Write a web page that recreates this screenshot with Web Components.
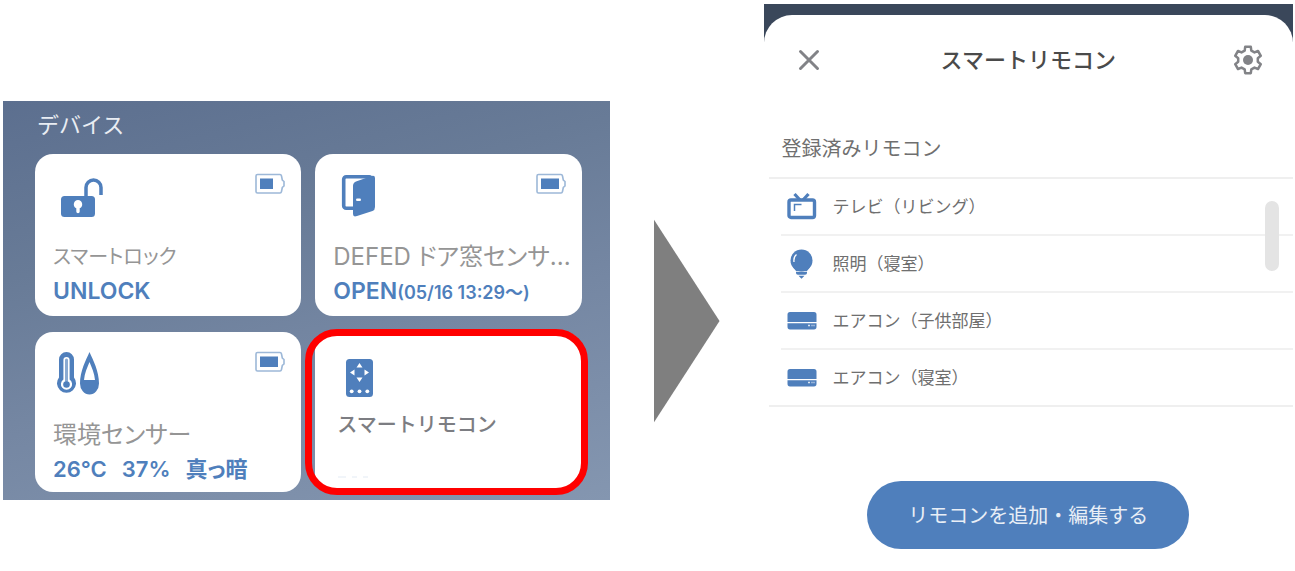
<!DOCTYPE html>
<html lang="ja">
<head>
<meta charset="UTF-8">
<title>スマートリモコン</title>
<style>
  body {
    margin: 0;
    background: #fff;
    font-family: Inter, "Noto Sans CJK JP", sans-serif;
  }
  .large {
    font-size: 23px;
  }
  .large small {
    font-size: 18px;
  }
</style>
</head>
<body>
<flow-page>
  <device-panel heading="デバイス">
    <device-card icon="lock" label="スマートロック" battery="13" small>
      <span class="large">UNLOCK</span>
    </device-card>
    <device-card icon="door" label="DEFED ドア窓センサ..." battery="18">
      <span class="large">OPEN<small>(05/16 13:29〜)</small></span>
    </device-card>
    <device-card icon="climate" label="環境センサー" battery="18">
      <span>26℃</span><span>37%</span><span>真っ暗</span>
    </device-card>
    <device-card icon="remote" label="スマートリモコン" highlighted></device-card>
  </device-panel>
  <flow-arrow></flow-arrow>
  <remote-sheet heading="スマートリモコン">
    <remote-row icon="tv">テレビ（リビング）</remote-row>
    <remote-row icon="bulb">照明（寝室）</remote-row>
    <remote-row icon="aircon">エアコン（子供部屋）</remote-row>
    <remote-row icon="aircon">エアコン（寝室）</remote-row>
  </remote-sheet>
</flow-page>

<script>
const BLUE = '#4f7fbc';

const ICONS = {
  lock: `<svg width="48" height="48" viewBox="0 0 48 48" fill="${BLUE}">
    <path d="M31 25V14.500a7.500 7.500 0 0 1 15 0V22" fill="none" stroke="${BLUE}" stroke-width="3.500"/>
    <rect x="6" y="23" width="34" height="21" rx="3.500"/>
    <path d="M23 27a4.300 4.300 0 0 1 1.700 8.200V38.500a1.700 1.700 0 0 1-3.400 0V35.200A4.300 4.300 0 0 1 23 27z" fill="#fff"/>
  </svg>`,
  door: `<svg width="48" height="48" viewBox="0 0 48 48">
    <rect x="8.700" y="3.700" width="28" height="31.600" rx="2.500" fill="#fff" stroke="${BLUE}" stroke-width="3.600"/>
    <path d="M18 13Q18 9.500 21 8.500L36.500 3Q40 2 40 5V34Q40 37 37.500 38L22 43Q18 44.500 18 41z" fill="${BLUE}"/>
    <rect x="21" y="25.500" width="5" height="2.600" rx="1.300" fill="#fff"/>
  </svg>`,
  climate: `<svg width="48" height="48" viewBox="0 0 48 48">
    <path d="M4 8.500a7.500 7.500 0 0 1 15 0V26.500a9.500 9.500 0 1 1-15 0z" fill="${BLUE}"/>
    <path d="M8.400 9a3.100 3.100 0 0 1 6.200 0V28.500a5.600 5.600 0 1 1-6.200 0z" fill="#fff"/>
    <path d="M11.500 9V30" stroke="#8aaad2" stroke-width="3" stroke-linecap="round"/>
    <circle cx="11.500" cy="33.500" r="3.300" fill="${BLUE}"/>
    <path d="M34.500 1C38 9 44 20 44 32.500A9.500 11 0 0 1 25 32.500C25 20 31 9 34.500 1z" fill="${BLUE}"/>
    <path d="M34.500 11C36.500 16 39.500 22 40 29H29C29.500 22 32.500 16 34.500 11z" fill="#fff"/>
  </svg>`,
  remote: `<svg width="48" height="48" viewBox="0 0 48 48">
    <rect x="7" y="8" width="27" height="38" rx="3.500" fill="${BLUE}"/>
    <path d="M20.500 12l3 4.500h-6zM20.500 31l3-4.500h-6zM11 21.500l4.500-3v6zM30 21.500l-4.500-3v6z" fill="#fff"/>
    <circle cx="12.700" cy="40.300" r="1.900" fill="#fff"/>
    <circle cx="20.500" cy="40.300" r="1.900" fill="#fff"/>
    <circle cx="28.300" cy="40.300" r="1.900" fill="#fff"/>
  </svg>`,
  tv: `<svg width="30" height="30" viewBox="0 0 30 30" fill="none" stroke="${BLUE}">
    <path d="M7.500 2l5.500 6M21.500 2l-5.500 6" stroke-width="3.200"/>
    <rect x="2" y="8" width="25.500" height="17.500" rx="2" stroke-width="3.400"/>
    <path d="M7.500 19v-6.500h7" stroke-width="1.500"/>
  </svg>`,
  bulb: `<svg width="30" height="30" viewBox="0 0 30 30" fill="${BLUE}">
    <circle cx="14.500" cy="11.500" r="11"/>
    <path d="M6 18h17l-3 4H9zM9 22.800h11v1.200q0 1.500-2 1.800h-7q-2-.3-2-1.800zM11.500 26.800h6l-3 3z"/>
    <path d="M7 13c-.5-4 .5-6 2.500-7.500" fill="none" stroke="#fff" stroke-width="1.300"/>
  </svg>`,
  aircon: `<svg width="30" height="30" viewBox="0 0 30 30" fill="${BLUE}">
    <path d="M.500 8.500q0-2.500 2.500-2.500h24q2.500 0 2.500 2.500V16H.500zM.500 17.300h29v3.500q0 2.700-2.500 2.700H3q-2.500 0-2.500-2.700z"/>
    <path d="M21 19.500h2M24.500 19.500h1M26.500 19.500h1" stroke="#dce6f2" stroke-width="1.300"/>
  </svg>`,
  close: `<svg width="30" height="30" viewBox="0 0 30 30">
    <path d="M6.500 6.500l17 17M23.500 6.500l-17 17" stroke="#828387" stroke-width="3" stroke-linecap="round"/>
  </svg>`,
  gear: `<svg width="30" height="30" viewBox="0 0 30 30">
    <path d="M11.700 5.600L12.200 1.800H17.800L18.300 5.600L21.500 7.400L25 6L27.800 10.800L24.800 13.200V16.800L27.800 19.200L25 24L21.500 22.600L18.300 24.400L17.800 28.200H12.200L11.700 24.400L8.500 22.600L5 24L2.200 19.200L5.200 16.800V13.200L2.200 10.800L5 6L8.500 7.400z"
      fill="none" stroke="#828387" stroke-width="2.500" stroke-linejoin="round"/>
    <circle cx="15" cy="15" r="5" fill="#828387"/>
  </svg>`
};

const batteryIcon = (level) => `<svg width="30" height="22" viewBox="0 0 30 22" aria-hidden="true">
  <path d="M2.500 1.500H25q1.200 0 1.500 1.500l.8 4 1.700 1.500v4.500l-1.700 1.500-.8 4Q26.200 20 25 20H2.500Q1 20 1 18.500V3Q1 1.500 2.500 1.500z" fill="none" stroke="#9db8d8" stroke-width="1.600"/>
  <rect x="5" y="5.500" width="${level}" height="10.500" fill="${BLUE}"/>
</svg>`;

class FlowPage extends HTMLElement {
  constructor() {
    super();
    this.attachShadow({ mode: 'open' });
    this.shadowRoot.innerHTML = `
      <style>
        :host {
          display: grid;
          grid-template-columns: minmax(0, 606fr) 66px minmax(0, 529fr);
          column-gap: 44px;
          align-items: start;
          padding: 4px 2px 0 3px;
        }
      </style>
      <slot></slot>
    `;
  }
}

class FlowArrow extends HTMLElement {
  constructor() {
    super();
    this.attachShadow({ mode: 'open' });
    this.shadowRoot.innerHTML = `
      <style>
        :host {
          display: block;
          margin-top: 215px;
          height: 204px;
          background: #7f7f7f;
          clip-path: polygon(0 0, 100% 50%, 0 100%);
        }
      </style>
    `;
  }
}

class DevicePanel extends HTMLElement {
  constructor() {
    super();
    this.attachShadow({ mode: 'open' });
    this.shadowRoot.innerHTML = `
      <style>
        :host {
          display: block;
          margin-top: 97px;
          padding: 8px 28px 8px 32px;
          background: linear-gradient(165deg, #5c6f8f 0%, #687b97 32%, #7587a3 60%, #8496b0 100%);
        }
        h2 {
          margin: 0 2px 13px;
          font-size: 22px;
          line-height: 32px;
          font-weight: 400;
          color: #e9edf3;
        }
        .cards {
          display: grid;
          grid-template-columns: repeat(2, minmax(0, 1fr));
          gap: 16px 14px;
        }
      </style>
      <h2>${this.getAttribute('heading')}</h2>
      <div class="cards"><slot></slot></div>
    `;
  }
}

class DeviceCard extends HTMLElement {
  constructor() {
    super();
    const level = this.getAttribute('battery');
    this.attachShadow({ mode: 'open' });
    this.shadowRoot.innerHTML = `
      <style>
        :host {
          position: relative;
          display: block;
          box-sizing: border-box;
          min-height: 160px;
          padding: 19px 8px 7px 18px;
          border-radius: 18px;
          background: #fff;
        }
        .top {
          display: flex;
          justify-content: space-between;
          align-items: flex-start;
          padding: 0 8px 0 2px;
          margin-bottom: 20px;
        }
        svg {
          display: block;
        }
        h3 {
          margin: 0;
          font-size: 24px;
          line-height: 32px;
          font-weight: 400;
          font-feature-settings: "palt";
          color: #959595;
          white-space: nowrap;
        }
        .state {
          display: flex;
          gap: 15px;
          margin-top: 2px;
          font-size: 22px;
          line-height: 32px;
          font-weight: 600;
          font-feature-settings: "palt";
          color: #4f7fbc;
          white-space: nowrap;
        }
        :host([small]) h3 {
          font-size: 20px;
        }
        :host([highlighted]) {
          padding-left: 22px;
        }
        :host([highlighted]) .top {
          margin-bottom: 10px;
        }
        :host([highlighted]) h3 {
          font-size: 20px;
          font-weight: 500;
          font-feature-settings: normal;
          color: #7c7d82;
        }
        :host([highlighted])::after {
          content: "";
          position: absolute;
          inset: -3px -6px -3px -10px;
          border: 7px solid #f00;
          border-radius: 32px;
        }
        .marks {
          margin-top: 35px;
        }
      </style>
      <div class="top">
        ${ICONS[this.getAttribute('icon')]}
        ${level ? batteryIcon(level) : ''}
      </div>
      <h3>${this.getAttribute('label')}</h3>
      ${this.hasAttribute('highlighted')
        ? '<svg class="marks" width="32" height="2"><path d="M1 1h8M15 1h5M26 1h5" stroke="#e3ebf4" stroke-width="1"/></svg>'
        : '<div class="state"><slot></slot></div>'}
    `;
  }
}

class RemoteRow extends HTMLElement {
  constructor() {
    super();
    this.setAttribute('role', 'listitem');
    this.attachShadow({ mode: 'open' });
    this.shadowRoot.innerHTML = `
      <style>
        :host {
          display: flex;
          align-items: center;
          gap: 16px;
          box-sizing: border-box;
          height: 57px;
          margin-left: 12px;
          padding-left: 6px;
          border-bottom: 2px solid #f1f1f1;
          font-size: 17px;
          line-height: 24px;
          color: #6f6f6f;
        }
        :host(:last-of-type) {
          height: 55px;
          border-bottom: 0;
        }
      </style>
      ${ICONS[this.getAttribute('icon')]}
      <span><slot></slot></span>
    `;
  }
}

class RemoteSheet extends HTMLElement {
  constructor() {
    super();
    this.attachShadow({ mode: 'open' });
    this.shadowRoot.innerHTML = `
      <style>
        :host {
          display: block;
          padding-top: 11px;
          background: linear-gradient(#3a475a, #3a475a) top / 100% 38px no-repeat;
        }
        .sheet {
          border-radius: 28px 28px 0 0;
          background: #fff;
        }
        header {
          display: flex;
          align-items: center;
          justify-content: space-between;
          height: 90px;
          padding: 0 30px;
        }
        h1 {
          margin: 0;
          font-size: 22px;
          line-height: 32px;
          font-weight: 500;
          color: #4a4a4a;
        }
        header button {
          padding: 0;
          border: 0;
          background: none;
          line-height: 0;
        }
        h2 {
          margin: 0;
          padding: 32px 18px 16px;
          font-size: 20px;
          line-height: 24px;
          font-weight: 400;
          color: #6f6f6f;
        }
        .list {
          position: relative;
          margin-left: 5px;
          border: solid #efefef;
          border-width: 2px 0;
        }
        .thumb {
          position: absolute;
          top: 22px;
          right: 14px;
          width: 14px;
          height: 70px;
          border-radius: 7px;
          background: #e4e4e4;
        }
        .add {
          display: block;
          width: 322px;
          height: 68px;
          margin: 74px auto 0;
          padding: 0 0 2px;
          border: 0;
          border-radius: 34px;
          background: #4f7fbc;
          color: #e8eef6;
          font: inherit;
          font-size: 20px;
        }
      </style>
      <div class="sheet">
        <header>
          <button aria-label="閉じる">${ICONS.close}</button>
          <h1>${this.getAttribute('heading')}</h1>
          <button aria-label="設定">${ICONS.gear}</button>
        </header>
        <h2>登録済みリモコン</h2>
        <div class="list" role="list">
          <slot></slot>
          <div class="thumb"></div>
        </div>
        <button class="add">リモコンを追加・編集する</button>
      </div>
    `;
  }
}

customElements.define('flow-page', FlowPage);
customElements.define('flow-arrow', FlowArrow);
customElements.define('device-panel', DevicePanel);
customElements.define('device-card', DeviceCard);
customElements.define('remote-row', RemoteRow);
customElements.define('remote-sheet', RemoteSheet);
</script>
</body>
</html>
